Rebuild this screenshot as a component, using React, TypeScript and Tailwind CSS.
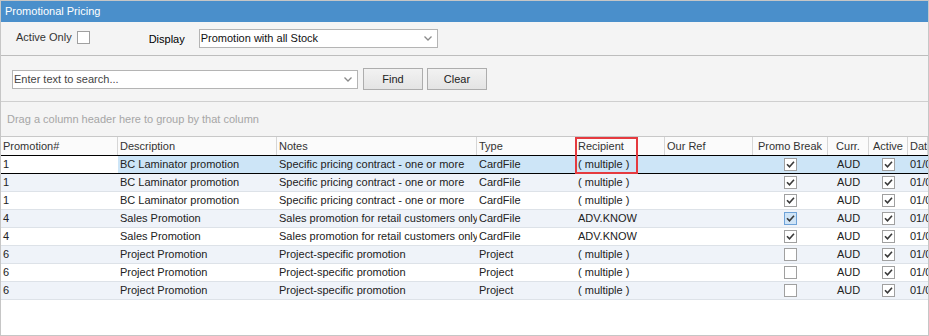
import React from 'react';

type Row = {
  num: string;
  desc: string;
  notes: string;
  type: string;
  recipient: string;
  promo: boolean;
  promoHover?: boolean;
  active: boolean;
};

const rows: Row[] = [
  { num: '1', desc: 'BC Laminator promotion', notes: 'Specific pricing contract - one or more', type: 'CardFile', recipient: '( multiple )', promo: true, active: true },
  { num: '1', desc: 'BC Laminator promotion', notes: 'Specific pricing contract - one or more', type: 'CardFile', recipient: '( multiple )', promo: true, active: true },
  { num: '1', desc: 'BC Laminator promotion', notes: 'Specific pricing contract - one or more', type: 'CardFile', recipient: '( multiple )', promo: true, active: true },
  { num: '4', desc: 'Sales Promotion', notes: 'Sales promotion for retail customers only', type: 'CardFile', recipient: 'ADV.KNOW', promo: true, promoHover: true, active: true },
  { num: '4', desc: 'Sales Promotion', notes: 'Sales promotion for retail customers only', type: 'CardFile', recipient: 'ADV.KNOW', promo: true, active: true },
  { num: '6', desc: 'Project Promotion', notes: 'Project-specific promotion', type: 'Project', recipient: '( multiple )', promo: false, active: true },
  { num: '6', desc: 'Project Promotion', notes: 'Project-specific promotion', type: 'Project', recipient: '( multiple )', promo: false, active: true },
  { num: '6', desc: 'Project Promotion', notes: 'Project-specific promotion', type: 'Project', recipient: '( multiple )', promo: false, active: true },
];

const cols = 'grid grid-cols-[117px_159px_200px_99px_89px_88px_75px_41px_39px_1fr]';

function Chevron() {
  return (
    <svg width="8" height="5" viewBox="0 0 8 5" className="shrink-0">
      <path d="M0.5 0.5 L4 4 L7.5 0.5" fill="none" stroke="#8a8a8a" strokeWidth="1.3" />
    </svg>
  );
}

function CheckBox({ checked, hover }: { checked: boolean; hover?: boolean }) {
  return (
    <div
      className={
        hover
          ? 'w-[13px] h-[13px] border border-[#6ea2d8] bg-[#cfe4f7] flex items-center justify-center'
          : 'w-[13px] h-[13px] border border-[#a0a0a0] bg-white flex items-center justify-center'
      }
    >
      {checked ? (
        <svg width="11" height="11" viewBox="0 0 11 11">
          <path d="M2 5.2 L4.5 7.8 L9 2.8" fill="none" stroke="#3a3a3a" strokeWidth="1.6" />
        </svg>
      ) : null}
    </div>
  );
}

function HeaderCell({ label, center }: { label: string; center?: boolean }) {
  return (
    <div
      className={
        'h-[18px] leading-[18px] px-[2px] border-r border-[#d6d6d6] text-[#333] whitespace-nowrap overflow-hidden ' +
        (center ? 'text-center' : '')
      }
    >
      {label}
    </div>
  );
}

function DataRow({ row, index }: { row: Row; index: number }) {
  const selected = index === 0;
  const rowBg = selected ? 'bg-[#cde5f7]' : index % 2 === 1 ? 'bg-[#eff3f9]' : 'bg-white';
  const cell = 'px-[2px] whitespace-nowrap overflow-hidden';

  return (
    <div
      className={
        cols +
        ' leading-[17px] text-[#222] ' +
        rowBg +
        (selected ? ' h-[19px] border-y border-black' : ' h-[18px] border-b border-[#dde2e8]')
      }
    >
      <div className={cell + (selected ? ' bg-white' : '')}>{row.num}</div>
      <div className={cell}>{row.desc}</div>
      <div className={cell}>{row.notes}</div>
      <div className={cell}>{row.type}</div>
      <div className={cell}>{row.recipient}</div>
      <div className={cell}></div>
      <div className="flex items-center justify-center">
        <CheckBox checked={row.promo} hover={row.promoHover} />
      </div>
      <div className={cell + ' text-center'}>AUD</div>
      <div className="flex items-center justify-center">
        <CheckBox checked={row.active} />
      </div>
      <div className={cell}>01/01/2020</div>
    </div>
  );
}

export default function App() {
  return (
    <div className="w-[929px] h-[336px] bg-white font-['Liberation_Sans',Arial,sans-serif] text-[11px] overflow-hidden">
      <div className="relative h-full border border-[#c6c6c6] flex flex-col">
        {/* title */}
        <div className="h-[21px] shrink-0 bg-[#4a8fcb] text-white text-[11px] leading-[21px] pl-[4px]">
          Promotional Pricing
        </div>

        {/* filters */}
        <div className="h-[34px] shrink-0 bg-[#f4f4f4] border-b border-[#bdbdbd] flex items-start">
          <div className="ml-[15px] mt-[9px] flex items-center gap-[5px]">
            <span className="text-[#333] leading-[13px]">Active Only</span>
            <div className="w-[13px] h-[13px] border border-[#a0a0a0] bg-white" />
          </div>
          <span className="ml-[59px] mt-[11px] text-black leading-[13px]">Display</span>
          <div className="ml-[14px] mt-[7px] w-[239px] h-[19px] border border-[#b4b4b4] bg-white flex items-center justify-between pl-[1px] pr-[5px]">
            <span className="text-[#111]">Promotion with all Stock</span>
            <Chevron />
          </div>
        </div>

        {/* search */}
        <div className="h-[46px] shrink-0 bg-[#f4f4f4] border-b border-[#cfcfcf] flex items-start">
          <div className="ml-[11px] mt-[14px] w-[346px] h-[19px] border border-[#b4b4b4] bg-white flex items-center justify-between pl-[1px] pr-[5px]">
            <span className="text-[#444]">Enter text to search...</span>
            <Chevron />
          </div>
          <button className="ml-[5px] mt-[12px] w-[60px] h-[22px] border border-[#adadad] bg-gradient-to-b from-[#f2f2f2] to-[#e4e4e4] text-[#222]">
            Find
          </button>
          <button className="ml-[4px] mt-[12px] w-[60px] h-[22px] border border-[#adadad] bg-gradient-to-b from-[#f2f2f2] to-[#e4e4e4] text-[#222]">
            Clear
          </button>
        </div>

        {/* group panel */}
        <div className="h-[35px] shrink-0 bg-[#f4f4f4] border-b border-[#c8c8c8] pl-[6px] pt-[11px] text-[#a6a6a6] leading-[13px]">
          Drag a column header here to group by that column
        </div>

        {/* grid */}
        <div className="flex-1 bg-white">
          <div className={cols + ' bg-[#fbfbfb]'}>
            <HeaderCell label="Promotion#" />
            <HeaderCell label="Description" />
            <HeaderCell label="Notes" />
            <HeaderCell label="Type" />
            <HeaderCell label="Recipient" />
            <HeaderCell label="Our Ref" />
            <HeaderCell label="Promo Break" center />
            <HeaderCell label="Curr." center />
            <HeaderCell label="Active" center />
            <HeaderCell label="Date" />
          </div>
          {rows.map((row, i) => (
            <DataRow key={i} row={row} index={i} />
          ))}
        </div>

        {/* highlight annotation */}
        <div className="absolute left-[574px] top-[136px] w-[63px] h-[37px] border-2 border-[#e53a3f]" />
      </div>
    </div>
  );
}
